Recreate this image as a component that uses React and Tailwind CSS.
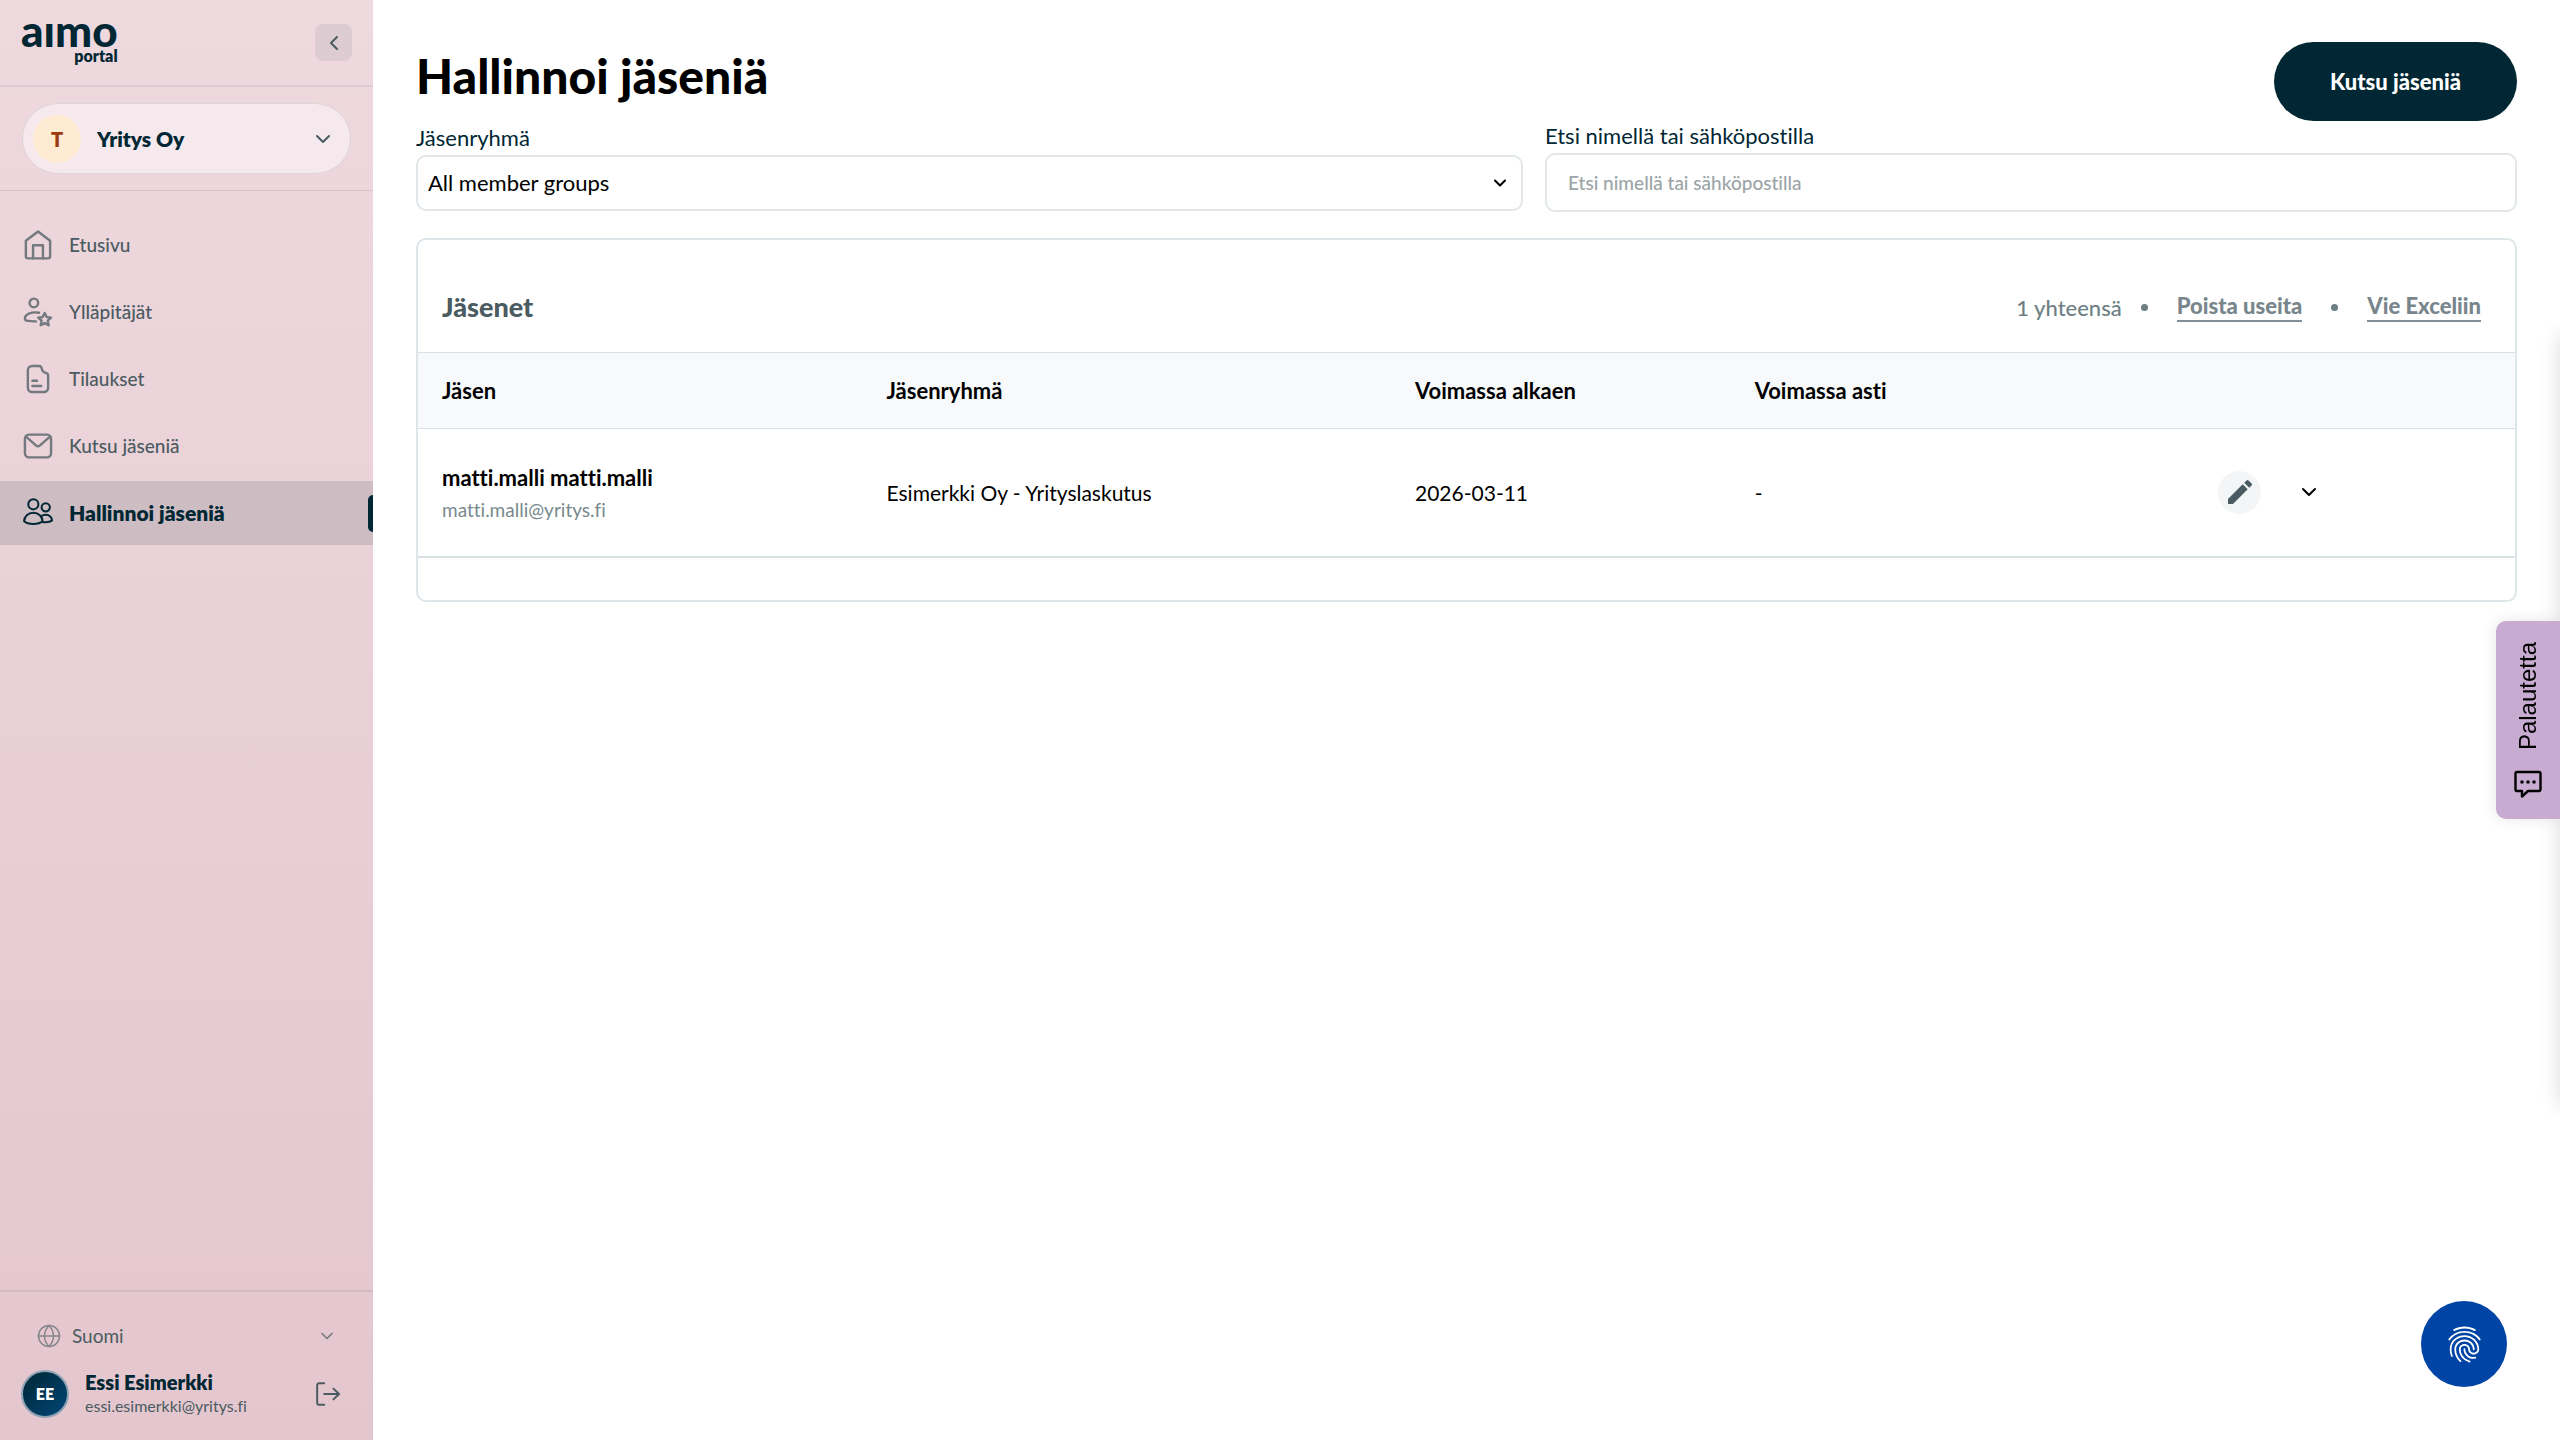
import { MdEdit, MdFingerprint } from 'react-icons/md'

function Icon({ className, children, strokeWidth = 1.5 }) {
  return (
    <svg
      className={className}
      viewBox="0 0 24 24"
      fill="none"
      stroke="currentColor"
      strokeWidth={strokeWidth}
      strokeLinecap="round"
      strokeLinejoin="round"
      aria-hidden="true"
    >
      {children}
    </svg>
  )
}

function ChevronDown({ className, strokeWidth = 2 }) {
  return (
    <Icon className={className} strokeWidth={strokeWidth}>
      <path d="M6 9l6 6 6-6" />
    </Icon>
  )
}

const HomeIcon = (
  <>
    <path d="M2.9 8.8 12 1.9l9.1 6.9v11.6a1.600 1.600 0 0 1-1.600 1.600h-15a1.600 1.600 0 0 1-1.600-1.600z" />
    <path d="M8.300 22V12.200h7.400V22" />
  </>
)

const AdminIcon = (
  <>
    <circle cx="8.9" cy="5.2" r="3.2" />
    <path d="M12.8 12.6c-5-1-10.6.8-10.6 4.200 0 1.100.7 1.700 2.300 1.900 2 .3 4.200.4 6 .3" />
    <path d="m17 12.700 1.500 3.100 3.300.4-2.500 2.300.7 3.400-3-1.600-3 1.600.7-3.400-2.500-2.300 3.300-.4z" />
  </>
)

const OrderIcon = (
  <>
    <path d="M12.8 2.2H7.6a3.2 3.2 0 0 0-3.2 3.2v13.2a3.2 3.2 0 0 0 3.2 3.2h8.8a3.2 3.2 0 0 0 3.2-3.2V9.4c0-1-.4-1.6-1.3-1.8-1.9-.4-3.2-1.6-3.5-3.4-.2-1.2-.9-2-2-2z" />
    <path d="M7.8 13.3h3.4M7.8 17.3h6.6" />
  </>
)

const MailIcon = (
  <>
    <rect x="2.2" y="3.5" width="19.6" height="17" rx="3" />
    <path d="m3 5 7.7 6.7c.8.7 1.8.7 2.6 0L21 5" />
  </>
)

const MembersIcon = (
  <>
    <circle cx="8.5" cy="5.5" r="3.8" />
    <circle cx="17.8" cy="7.7" r="3.1" />
    <path d="M1.6 18.2c0-3.6 3-6.4 6.9-6.4s6.9 2.8 6.9 6.4c-1.5 1.4-3.9 2-6.9 2s-5.4-.6-6.9-2z" />
    <path d="M14.3 14.6c1-.8 2.2-1.2 3.5-1.2 2.7 0 4.7 1.9 4.7 4.3-1.6 1.1-4.2 1.4-7.1 1" />
  </>
)

const navItems = [
  { label: 'Etusivu', icon: HomeIcon },
  { label: 'Ylläpitäjät', icon: AdminIcon },
  { label: 'Tilaukset', icon: OrderIcon },
  { label: 'Kutsu jäseniä', icon: MailIcon },
  { label: 'Hallinnoi jäseniä', icon: MembersIcon, active: true },
]

const members = [
  {
    name: 'matti.malli matti.malli',
    email: 'matti.malli@yritys.fi',
    group: 'Esimerkki Oy - Yrityslaskutus',
    from: '2026-03-11',
    until: '-',
  },
]

function Sidebar() {
  return (
    <aside className="w-[373px] shrink-0 flex flex-col bg-linear-to-b from-[#eed9de] to-[#e4c6ce] text-[#002733]">
      {/* Logo */}
      <div className="h-[87px] flex items-start justify-between pl-[21px] pr-[21px] border-b-2 border-[#002733]/8">
        <a href="#" className="flex flex-col items-end pt-3">
          <span className="text-[44px] leading-9 font-black">aımo</span>
          <span className="text-base leading-4 font-extrabold">portal</span>
        </a>
        <button
          type="button"
          aria-label="Sulje valikko"
          className="mt-6 size-[37px] rounded-lg bg-[#002733]/7 flex items-center justify-center text-[#4a5b61]"
        >
          <Icon className="size-6" strokeWidth={2}>
            <path d="M15 6l-6 6 6 6" />
          </Icon>
        </button>
      </div>

      {/* Company */}
      <div className="px-[22px] py-4 border-b border-[#002733]/10">
        <div className="relative h-[71px] rounded-full border border-[#002733]/10 bg-[#f6e9ed] flex items-center pl-[10px]">
          <span className="size-12 shrink-0 rounded-full bg-[#ffebd2] text-[#9a3d12] text-xl font-extrabold flex items-center justify-center">
            T
          </span>
          <select
            aria-label="Yritys"
            className="appearance-none flex-1 h-full pl-4 pr-12 bg-transparent text-[21px] font-extrabold"
          >
            <option>Yritys Oy</option>
          </select>
          <ChevronDown className="size-6 absolute right-[15px] pointer-events-none text-[#4a5b61]" />
        </div>
      </div>

      {/* Navigation */}
      <nav className="pt-[22px] flex-1 flex flex-col gap-[3px]">
        {navItems.map((item) => (
          <a
            key={item.label}
            href="#"
            className={
              item.active
                ? 'relative h-16 flex items-center gap-[15px] pl-[22px] text-[21px] font-extrabold bg-[#002733]/12'
                : 'h-16 flex items-center gap-[15px] pl-[22px] text-[19px] font-medium text-[#4a5b61]'
            }
          >
            <Icon
              className={item.active ? 'size-8' : 'size-8 opacity-75'}
              strokeWidth={item.active ? 1.5 : 1.8}
            >
              {item.icon}
            </Icon>
            {item.label}
            {item.active && (
              <span className="absolute right-0 w-[5px] h-[37px] rounded-l-md bg-[#002733]" />
            )}
          </a>
        ))}
      </nav>

      {/* Language and user */}
      <div className="border-t-2 border-[#002733]/8 pt-5 pb-4">
        <div className="relative flex items-center h-12 pl-[37px]">
          <Icon className="size-6 text-[#4a5b61] opacity-60" strokeWidth={1.5}>
            <circle cx="12" cy="12" r="10.5" />
            <path d="M1.5 12h21M12 1.5c-6 6.4-6 14.6 0 21M12 1.5c6 6.4 6 14.6 0 21" />
          </Icon>
          <select
            aria-label="Kieli"
            className="appearance-none flex-1 h-full pl-[11px] bg-transparent text-[19px] text-[#4a5b61]"
          >
            <option>Suomi</option>
          </select>
          <ChevronDown className="size-5 absolute right-9 pointer-events-none text-[#4a5b61] opacity-70" />
        </div>
        <div className="flex items-center h-[60px] pl-[21px] pr-8 mt-1">
          <span className="size-12 shrink-0 rounded-full border-2 border-[#8fa3b5] bg-linear-to-br from-[#002733] to-[#00467a] text-white text-base font-extrabold flex items-center justify-center">
            EE
          </span>
          <div className="flex-1 pl-4">
            <p className="text-xl leading-6 font-extrabold">Essi Esimerkki</p>
            <p className="text-base leading-6 text-[#4a5b61]">essi.esimerkki@yritys.fi</p>
          </div>
          <button type="button" aria-label="Kirjaudu ulos" className="text-[#4a5b61]">
            <Icon className="size-[26px]" strokeWidth={1.8}>
              <path d="M8.5 2H4a2 2 0 0 0-2 2v16a2 2 0 0 0 2 2h4.5" />
              <path d="M8.5 12H22M17 7l5.2 5-5.2 5" />
            </Icon>
          </button>
        </div>
      </div>
    </aside>
  )
}

function Filters() {
  return (
    <div className="grid grid-cols-[1107fr_972fr] items-center gap-x-[22px]">
      <div>
        <label htmlFor="group" className="block mb-[3px] text-[22px] leading-7 text-[#002733]">
          Jäsenryhmä
        </label>
        <div className="relative flex items-center">
          <select
            id="group"
            className="appearance-none w-full h-14 rounded-[10px] border-2 border-[#e1e7ea] bg-white px-[10px] text-[22px] text-black"
          >
            <option>All member groups</option>
          </select>
          <ChevronDown className="size-5 absolute right-[13px] pointer-events-none text-black" strokeWidth={2.5} />
        </div>
      </div>
      <div>
        <label htmlFor="search" className="block mb-[3px] text-[22px] leading-7 text-[#002733]">
          Etsi nimellä tai sähköpostilla
        </label>
        <input
          id="search"
          type="text"
          placeholder="Etsi nimellä tai sähköpostilla"
          className="w-full h-[59px] rounded-[10px] border-2 border-[#e1e7ea] px-[21px] text-[19px] font-medium placeholder:text-[#9ba4a7]"
        />
      </div>
    </div>
  )
}

function MembersCard() {
  return (
    <section className="mt-[26px] rounded-[10px] border-2 border-[#dfe6e9] pb-[42px]">
      <div className="h-28 pt-[22px] pl-6 pr-[34px] flex items-center justify-between">
        <h2 className="text-[27px] font-black text-[#4a5b61]">Jäsenet</h2>
        <div className="flex items-center text-[22px] text-[#6d7f84]">
          <span className="font-medium">1 yhteensä</span>
          <span className="size-[7px] rounded-full bg-[#6d7f84] ml-[19px] mr-[29px]" />
          <a href="#" className="font-black border-b-2 border-[#808f99] leading-7 text-[#78868c]">
            Poista useita
          </a>
          <span className="size-[7px] rounded-full bg-[#6d7f84] mx-[29px]" />
          <a href="#" className="font-black border-b-2 border-[#808f99] leading-7 text-[#78868c]">
            Vie Exceliin
          </a>
        </div>
      </div>
      <table className="w-full table-fixed text-left text-[22px] text-black">
        <colgroup>
          <col className="w-[21.2%]" />
          <col className="w-[25.2%]" />
          <col className="w-[16.2%]" />
          <col className="w-[22.1%]" />
          <col />
        </colgroup>
        <thead>
          <tr className="h-[76px] bg-[#f7f9fb] border-y border-[#d8e2e5]">
            <th className="px-6 font-bold">Jäsen</th>
            <th className="px-6 font-bold">Jäsenryhmä</th>
            <th className="px-6 font-bold">Voimassa alkaen</th>
            <th className="px-6 font-bold">Voimassa asti</th>
            <th></th>
          </tr>
        </thead>
        <tbody>
          {members.map((m) => (
            <tr key={m.email} className="h-32 border-b-2 border-[#d8e2e5]">
              <td className="px-6 pt-[3px]">
                <p className="font-bold leading-8">{m.name}</p>
                <p className="text-[19px] leading-8 text-[#78898d]">{m.email}</p>
              </td>
              <td className="px-6 text-[21px]">{m.group}</td>
              <td className="px-6 text-[21px]">{m.from}</td>
              <td className="px-6 text-[21px]">{m.until}</td>
              <td className="px-6">
                <div className="flex items-center gap-7">
                  <button
                    type="button"
                    aria-label="Muokkaa"
                    className="size-[43px] rounded-full bg-[#f3f5f7] text-[#4a5b61] flex items-center justify-center"
                  >
                    <MdEdit className="size-8" />
                  </button>
                  <button type="button" aria-label="Näytä lisää" className="p-2">
                    <ChevronDown className="size-6" />
                  </button>
                </div>
              </td>
            </tr>
          ))}
        </tbody>
      </table>
    </section>
  )
}

function FeedbackTab() {
  return (
    <button
      type="button"
      className="fixed right-0 top-[621px] w-16 h-[198px] rounded-l-[10px] bg-[#c8abd0] text-black shadow-[0_0_16px_rgba(0,0,0,0.1)] flex flex-col items-center justify-between py-[21px]"
    >
      <span className="[writing-mode:vertical-rl] rotate-180 font-['Liberation_Sans',sans-serif] text-2xl leading-8">
        Palautetta
      </span>
      <svg className="size-7" viewBox="0 0 28 28" fill="none" stroke="currentColor" strokeWidth="2.4" strokeLinejoin="round">
        <path d="M3 2h22a1.5 1.5 0 0 1 1.5 1.5v16A1.5 1.5 0 0 1 25 21H14l-6 5.5V21H3a1.5 1.5 0 0 1-1.5-1.5v-16A1.5 1.5 0 0 1 3 2z" />
        <g fill="currentColor" stroke="none">
          <circle cx="8" cy="12" r="1.8" />
          <circle cx="14" cy="12" r="1.8" />
          <circle cx="20" cy="12" r="1.8" />
        </g>
      </svg>
    </button>
  )
}

export default function App() {
  return (
    <div className="min-h-screen flex bg-white font-['Lato','Liberation_Sans',sans-serif] [font-variant-ligatures:none]">
      <Sidebar />
      <main className="flex-1 min-w-0 px-[43px] pt-[42px]">
        <div className="h-20 flex items-start justify-between">
          <h1 className="text-[48px] leading-[68px] font-black text-black">Hallinnoi jäseniä</h1>
          <button
            type="button"
            className="h-[79px] px-14 rounded-full bg-[#002733] text-white text-[22px] font-black"
          >
            Kutsu jäseniä
          </button>
        </div>
        <Filters />
        <MembersCard />
      </main>

      {/* Closed side panel, only its shadow reaches the page */}
      <div className="fixed left-full top-[335px] w-96 h-[770px] shadow-[0_0_20px_rgba(0,0,0,0.14)]" />
      <FeedbackTab />
      <button
        type="button"
        aria-label="Evästeasetukset"
        className="fixed right-[53px] bottom-[53px] size-[86px] rounded-full bg-[#0045a5] text-white flex items-center justify-center"
      >
        <MdFingerprint className="size-[43px]" />
      </button>
    </div>
  )
}
